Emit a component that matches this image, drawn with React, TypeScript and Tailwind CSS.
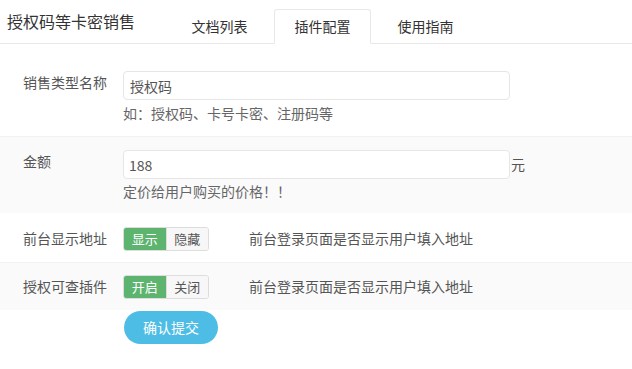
import { useState } from 'react';

const font = { fontFamily: '"Noto Sans CJK SC", "Noto Sans", sans-serif' };

const tabs = ['文档列表', '插件配置', '使用指南'];

const Toggle = ({ on, off, value, onChange }: { on: string; off: string; value: boolean; onChange: (v: boolean) => void }) => (
  <div className="flex h-[24px] w-[86px] rounded-[3px] overflow-hidden border border-[#ddd] text-[13px] leading-none">
    <button
      onClick={() => onChange(true)}
      className={`flex-1 flex items-center justify-center ${value ? 'bg-[#5cb46e] text-white' : 'bg-[#f7f7f7] text-[#555]'}`}
    >
      {on}
    </button>
    <button
      onClick={() => onChange(false)}
      className={`flex-1 flex items-center justify-center border-l border-[#ddd] ${!value ? 'bg-[#5cb46e] text-white' : 'bg-[#f7f7f7] text-[#555]'}`}
    >
      {off}
    </button>
  </div>
);

const App = () => {
  const [tab, setTab] = useState(1);
  const [showAddr, setShowAddr] = useState(true);
  const [query, setQuery] = useState(true);

  return (
    <div className="w-[632px] h-[369px] bg-white text-[14px] text-[#555]" style={font}>
      <header className="flex items-end h-[44px] border-b border-[#e8e8e8]">
        <h1 className="self-center pl-[7px] pb-[1px] text-[16px] text-[#333] w-[171px]">授权码等卡密销售</h1>
        <div className="flex gap-[6px]">
          {tabs.map((t, i) => (
            <button
              key={t}
              onClick={() => setTab(i)}
              className={`w-[97px] h-[35px] -mb-px flex items-center justify-center rounded-t-[3px] text-[#333] ${
                tab === i ? 'bg-white border border-[#e8e8e8] border-b-white' : 'border border-transparent'
              }`}
            >
              {t}
            </button>
          ))}
        </div>
      </header>

      <div className="flex pt-[27px] pb-[13px]">
        <label className="w-[123px] pl-[23px] pt-[1px]">销售类型名称</label>
        <div>
          <input
            defaultValue="授权码"
            className="w-[387px] h-[29px] px-[6px] border border-[#e6e6e6] rounded-[4px] text-[#555] outline-none"
          />
          <p className="mt-[3px] leading-[20px] text-[#666]">如：授权码、卡号卡密、注册码等</p>
        </div>
      </div>

      <div className="flex pt-[13px] pb-[12px] bg-[#fafafa] border-t border-[#f2f2f2]">
        <label className="w-[123px] pl-[23px] pt-[1px]">金额</label>
        <div>
          <div className="flex items-center">
            <input
              defaultValue="188"
              className="w-[387px] h-[29px] px-[5px] bg-white border border-[#e6e6e6] rounded-[4px] text-[#555] outline-none"
            />
            <span className="ml-[1px]">元</span>
          </div>
          <p className="mt-[2px] leading-[20px] text-[#666]">定价给用户购买的价格！！</p>
        </div>
      </div>

      <div className="flex items-center h-[49px] pt-[2px]">
        <label className="w-[123px] pl-[23px]">前台显示地址</label>
        <Toggle on="显示" off="隐藏" value={showAddr} onChange={setShowAddr} />
        <span className="ml-[40px]">前台登录页面是否显示用户填入地址</span>
      </div>

      <div className="flex items-center h-[48px] bg-[#fafafa] border-t border-[#f2f2f2]">
        <label className="w-[123px] pl-[23px]">授权可查插件</label>
        <Toggle on="开启" off="关闭" value={query} onChange={setQuery} />
        <span className="ml-[40px]">前台登录页面是否显示用户填入地址</span>
      </div>

      <div className="pl-[124px] pt-[1px]">
        <button className="w-[94px] h-[33px] rounded-full bg-[#4dbde6] text-white text-[14px]">确认提交</button>
      </div>
    </div>
  );
};

export default App;
